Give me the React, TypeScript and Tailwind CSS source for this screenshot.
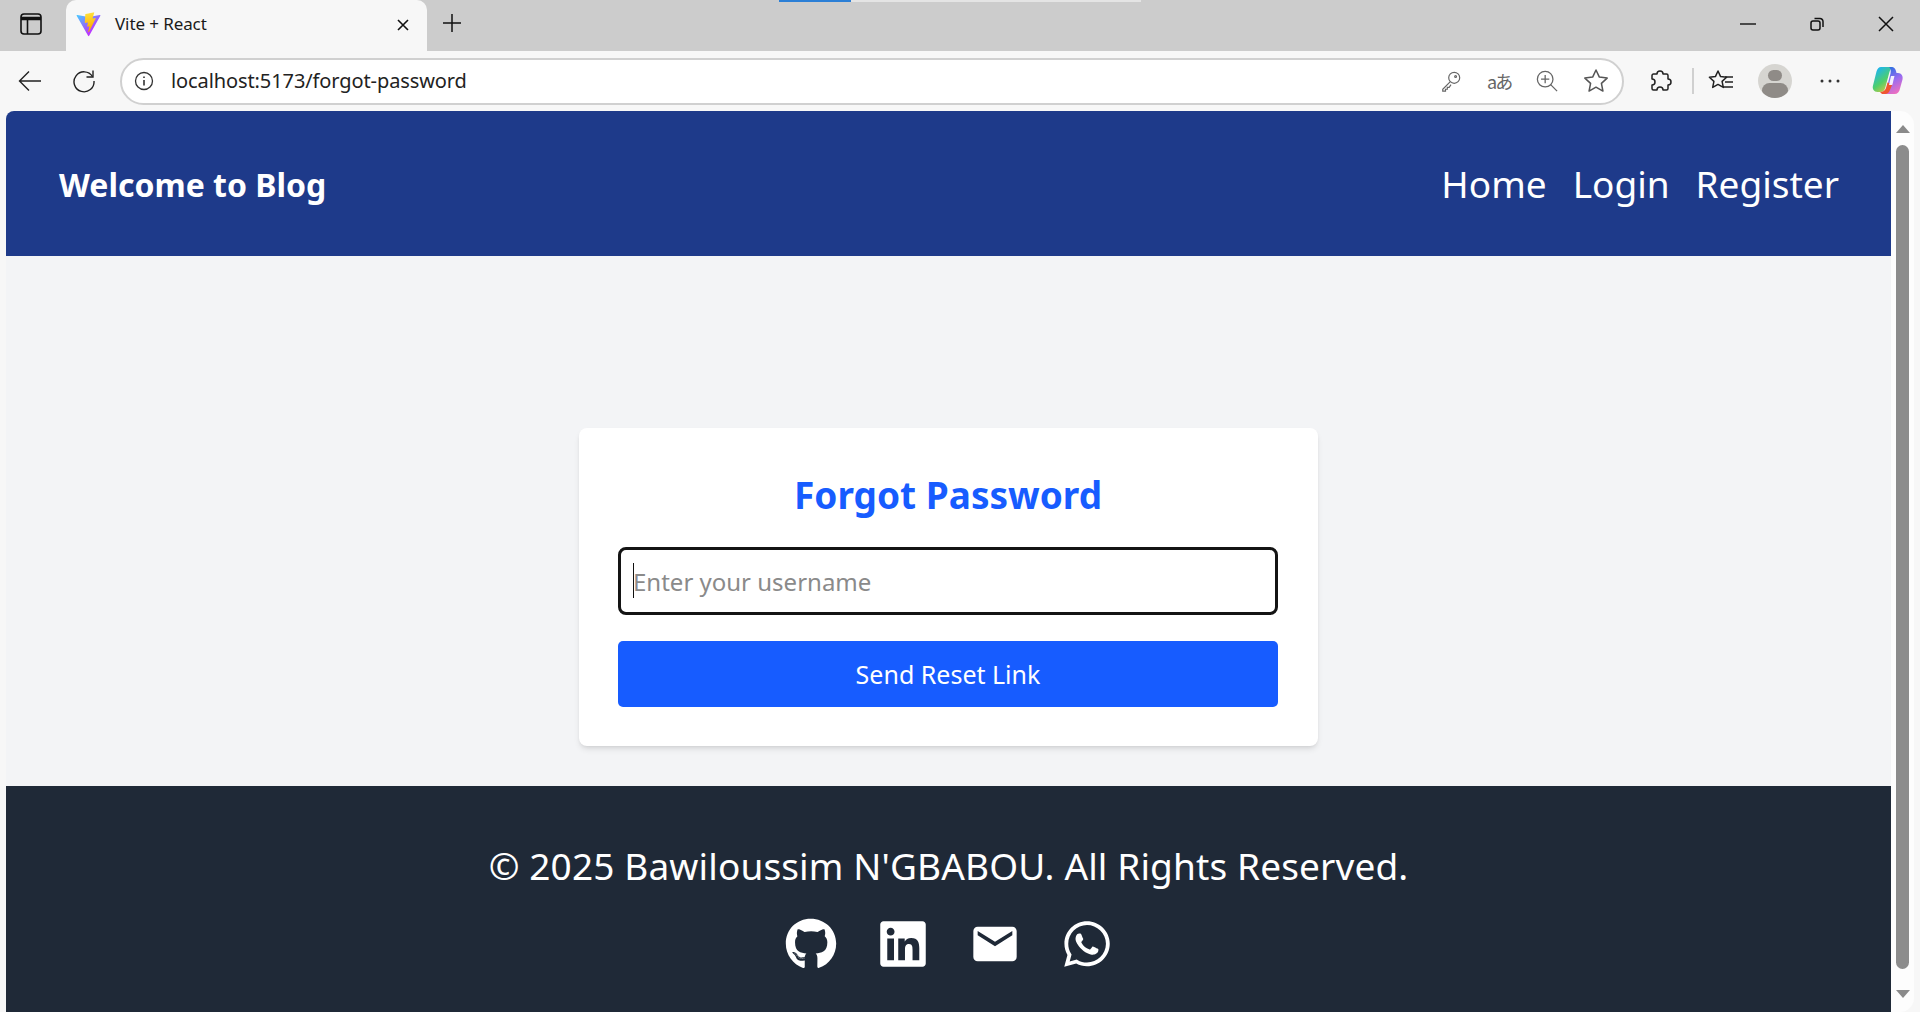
import React from 'react';
import { FaGithub, FaLinkedin, FaWhatsapp } from 'react-icons/fa';
import { MdEmail } from 'react-icons/md';

const ViteLogo = () => (
  <svg width="25" height="25" viewBox="0 0 410 404" fill="none">
    <path d="M399.6 59.5 215.9 388.2c-3.8 6.8-13.5 6.8-17.4.1L11.1 59.5c-4.1-7.3 2.1-16.2 10.4-14.7l183.9 32.9c1.2.2 2.4.2 3.5 0l180-32.8c8.3-1.5 14.6 7.3 10.5 14.6z" fill="url(#vitea)" />
    <path d="M292.9 1.6 156.9 28.2c-2.2.4-3.9 2.3-4 4.6l-8.4 141.2c-.2 3.3 2.9 5.9 6.1 5.2l37.9-8.7c3.5-.8 6.7 2.3 6 5.8l-11.3 55.2c-.8 3.7 2.7 6.9 6.3 5.8l23.4-7.1c3.6-1.1 7.1 2.1 6.3 5.8l-17.9 86.6c-1.1 5.4 6.1 8.4 9.1 3.7l2-3.1 110.8-221.2c1.9-3.7-1.3-7.9-5.4-7.1l-39 7.5c-3.7.7-6.8-2.7-5.7-6.3l25.5-88.3c1.1-3.6-2.1-7-5.7-6.3z" fill="url(#viteb)" />
    <defs>
      <linearGradient id="vitea" x1="6" y1="33" x2="235" y2="344" gradientUnits="userSpaceOnUse">
        <stop stopColor="#41D1FF" />
        <stop offset="1" stopColor="#BD34FE" />
      </linearGradient>
      <linearGradient id="viteb" x1="194" y1="8" x2="236" y2="293" gradientUnits="userSpaceOnUse">
        <stop stopColor="#FFEA83" />
        <stop offset=".08" stopColor="#FFDD35" />
        <stop offset="1" stopColor="#FFA800" />
      </linearGradient>
    </defs>
  </svg>
);

const CopilotLogo = () => (
  <svg width="34" height="34" viewBox="0 0 34 34" fill="none">
    <defs>
      <linearGradient id="copa" x1="4" y1="8" x2="20" y2="28" gradientUnits="userSpaceOnUse">
        <stop stopColor="#1fb6e8" />
        <stop offset=".5" stopColor="#4fcf6a" />
        <stop offset="1" stopColor="#f6c33a" />
      </linearGradient>
      <linearGradient id="copb" x1="18" y1="2" x2="32" y2="26" gradientUnits="userSpaceOnUse">
        <stop stopColor="#1c6fe0" />
        <stop offset=".55" stopColor="#9a6cf0" />
        <stop offset="1" stopColor="#ee6fc0" />
      </linearGradient>
    </defs>
    <path d="M11 3h12.500c-2.500 1-3.500 3-4.200 5.500l-4 15C14.500 26.500 13 28 10.500 28H7.500C4 28 2 25 3 21.500l3.500-14C7.200 4.800 8.800 3 11 3z" fill="url(#copa)" />
    <path d="M19 3h2.500c2.300 0 3.800 1.500 4.500 4l.5 2h1.500c3.500 0 5.300 3 4.500 6.500l-2.500 9C29.500 28 27.500 30 24.500 30H12c2.500-.8 3.800-2.800 4.500-5.500l4-15C21 6.800 20.800 4.500 19 3z" fill="url(#copb)" />
    <path d="M10 28c3 0 5-1.500 6-4l1.500-5.500 5 1.500-3 7c-.8 2-2.500 3-4.500 3H12z" fill="#f0562f" />
    <path d="M21 12h3.500l-2.200 9H19z" fill="#f4f0ff" />
  </svg>
);

const Scrollbar = () => (
  <div className="w-[23px] shrink-0 flex flex-col items-center bg-[#fdfdfd] rounded-tr-[14px] rounded-br-[14px]">
    <div className="mt-[14px] h-0 w-0 border-x-[7px] border-b-[8px] border-x-transparent border-b-[#8a8a8a]" />
    <div className="mt-[12px] w-[13px] h-[824px] rounded-full bg-[#8c8c8c]" />
    <div className="mt-[21px] h-0 w-0 border-x-[7px] border-t-[8px] border-x-transparent border-t-[#8a8a8a]" />
  </div>
);

export default function App() {
  return (
    <div className="h-screen w-full overflow-hidden flex flex-col bg-[#f7f7f7] font-['Noto_Sans',sans-serif]">
      {/* TAB STRIP */}
      <div className="relative h-[51px] shrink-0 bg-[#cccccc] flex items-end">
        <div className="w-[66px] h-[51px] flex items-center pl-[20px] pb-[3px]">
          <svg width="22" height="22" viewBox="0 0 22 22" fill="none" stroke="#111" strokeWidth="1.6">
            <rect x="1" y="1" width="20" height="20" rx="3" />
            <path d="M1 5.500h20" strokeWidth="3.500" />
            <path d="M7.500 7v14" />
          </svg>
        </div>
        <div className="w-[361px] h-[51px] bg-[#f7f7f7] rounded-t-[10px] flex items-center pl-[10px] pr-[17px] pb-[2px]">
          <ViteLogo />
          <span className="ml-[14px] text-[17px] tracking-[-0.1px] text-[#1a1a1a] pb-[1px]">Vite + React</span>
          <svg className="ml-auto" width="14" height="14" viewBox="0 0 14 14" stroke="#111" strokeWidth="1.6">
            <path d="M2 2l10 10M12 2L2 12" />
          </svg>
        </div>
        <div className="w-[70px] h-[51px] flex items-center pl-[15px] pb-[5px]">
          <svg width="20" height="20" viewBox="0 0 20 20" stroke="#111" strokeWidth="1.5">
            <path d="M10 1v18M1 10h18" />
          </svg>
        </div>
        <div className="absolute top-0 left-[779px] h-[2px] w-[72px] bg-[#2b7fd6]" />
        <div className="absolute top-0 left-[851px] h-[2px] w-[290px] bg-[#e4e4e4]" />
        <div className="ml-auto h-[51px] flex items-center pr-[26px] gap-[53px] pb-[3px]">
          <svg width="16" height="16" viewBox="0 0 16 16" stroke="#111" strokeWidth="1.4"><path d="M0 8h16" /></svg>
          <svg width="16" height="16" viewBox="0 0 16 16" fill="none" stroke="#111" strokeWidth="1.5">
            <rect x="2" y="5" width="9" height="9" rx="2" />
            <path d="M5.500 2.500h5.500a3 3 0 0 1 3 3v5.500" />
          </svg>
          <svg width="16" height="16" viewBox="0 0 16 16" stroke="#111" strokeWidth="1.5"><path d="M1 1l14 14M15 1L1 15" /></svg>
        </div>
      </div>

      {/* TOOLBAR */}
      <div className="h-[60px] shrink-0 flex items-center pl-[18px]">
        <svg width="24" height="24" viewBox="0 0 24 24" fill="none" stroke="#222" strokeWidth="1.4">
          <path d="M23 12H1.500M11 2.500 1.500 12l9.500 9.500" />
        </svg>
        <svg className="ml-[30px]" width="24" height="24" viewBox="0 0 24 24" fill="none" stroke="#222" strokeWidth="1.4">
          <path d="M20.500 7.500A10 10 0 1 0 22 12" />
          <path d="M21 1.500v6.500h-6.500" />
        </svg>
        <div className="ml-[24px] w-[1504px] shrink-0 h-[47px] bg-white rounded-full border-2 border-[#d0d0d0] flex items-center pl-[12px] pr-[13px]">
          <svg width="20" height="20" viewBox="0 0 20 20" fill="none" stroke="#333" strokeWidth="1.3">
            <circle cx="10" cy="10" r="8.500" />
            <path d="M10 9v5.500M10 5.500v1.500" strokeWidth="1.600" />
          </svg>
          <span className="ml-[17px] text-[20px] tracking-[-0.1px] text-[#222]">localhost:5173/forgot-password</span>
          <svg className="ml-auto" width="22" height="22" viewBox="0 0 24 24" fill="none" stroke="#666" strokeWidth="1.3">
            <circle cx="15.500" cy="8.500" r="6" />
            <path d="M11 13 3 21v2h3v-2h2v-2h2l2-3" />
            <circle cx="17" cy="7" r="1" />
          </svg>
          <span className="ml-[25px] w-[26px] text-[18px] leading-none whitespace-nowrap text-[#666] font-['Noto_Sans_CJK_JP',sans-serif] tracking-[-2px]">aあ</span>
          <svg className="ml-[23px]" width="22" height="22" viewBox="0 0 24 24" fill="none" stroke="#666" strokeWidth="1.4">
            <circle cx="10" cy="10" r="8.500" />
            <path d="M16 16l7 7M10 5.500v9M5.500 10h9" />
          </svg>
          <svg className="ml-[25px]" width="26" height="26" viewBox="0 0 24 24" fill="none" stroke="#555" strokeWidth="1.4" strokeLinejoin="round">
            <path d="M12 1.800l3.100 6.600 7.200.9-5.300 4.900 1.400 7.100-6.400-3.600-6.400 3.600 1.400-7.100-5.300-4.900 7.200-.9z" />
          </svg>
        </div>
        <svg className="ml-[24px]" width="24" height="24" viewBox="0 0 24 24" fill="none" stroke="#222" strokeWidth="1.5" strokeLinejoin="round">
          <path d="M9 5a3 3 0 0 1 6 0h3.500a1.500 1.500 0 0 1 1.500 1.500V10a3 3 0 0 1 0 6v3.500a1.500 1.500 0 0 1-1.500 1.500H15a3 3 0 0 0-6 0H5.500A1.500 1.500 0 0 1 4 19.500V16a3 3 0 0 0 0-6V6.500A1.500 1.500 0 0 1 5.500 5z" />
        </svg>
        <div className="ml-[20px] h-[26px] w-[2px] bg-[#d0d0d0]" />
        <svg className="ml-[14px]" width="26" height="26" viewBox="0 0 26 26" fill="none" stroke="#222" strokeWidth="1.5" strokeLinejoin="round">
          <path d="M10 3l2.600 5.600 6 .7-4.500 4.100 1.200 6-5.300-3-5.300 3 1.200-6L1.400 9.300l6-.7z" />
          <path d="M17 9h8M17 14h8M15 19h10" />
        </svg>
        <div className="ml-[24px] w-[34px] h-[34px] rounded-full bg-[#d6d5d1] overflow-hidden flex flex-col items-center">
          <div className="mt-[6px] w-[14px] h-[14px] rounded-full bg-[#8f8b87]" />
          <div className="mt-[2px] w-[26px] h-[20px] rounded-full bg-[#8f8b87]" />
        </div>
        <svg className="ml-[28px]" width="20" height="6" viewBox="0 0 20 6" fill="#333">
          <circle cx="2" cy="3" r="1.500" />
          <circle cx="10" cy="3" r="1.500" />
          <circle cx="18" cy="3" r="1.500" />
        </svg>
        <div className="ml-[30px]"><CopilotLogo /></div>
      </div>

      {/* PAGE */}
      <div className="flex-1 min-h-0 flex ml-[6px] mr-[6px]">
        <div className="flex-1 min-w-0 flex flex-col bg-[#f3f4f6] overflow-hidden rounded-tl-[8px]">
          <header className="h-[145px] shrink-0 bg-[#1e3a8a] flex items-center justify-between pl-[53px] pr-[52px] text-white">
            <h1 className="text-[32px] font-bold leading-none pt-[2px]">Welcome to Blog</h1>
            <nav className="flex gap-[26px] text-[37px] leading-none">
              <a>Home</a>
              <a>Login</a>
              <a>Register</a>
            </nav>
          </header>

          <main className="flex-1 min-h-0 flex justify-center pt-[172px]">
            <div className="w-[739px] h-[318px] bg-white rounded-lg shadow-md pl-[39px] pr-[40px] pt-[41px]">
              <h2 className="text-center text-[37px] leading-[52px] font-bold text-[#175cff]">Forgot Password</h2>
              <div className="relative mt-[26px]">
                <input
                  placeholder="Enter your username"
                  className="w-full h-[68px] px-[12px] bg-white border-[3px] border-[#141414] rounded-lg text-[24px] text-[#111] placeholder:text-[#8a8a8a] outline-none"
                />
                <div className="absolute left-[15px] top-[16px] h-[35px] w-px bg-[#111]" />
              </div>
              <button className="mt-[26px] w-full h-[66px] pt-[1px] bg-[#175cff] rounded-[5px] text-white text-[25px]">
                Send Reset Link
              </button>
            </div>
          </main>

          <footer className="h-[226px] shrink-0 bg-[#1f2937] flex flex-col items-center text-white pt-[55px]">
            <p className="text-[37px] tracking-[0.13px] leading-[50px]">© 2025 Bawiloussim N&apos;GBABOU. All Rights Reserved.</p>
            <div className="mt-[27px] flex items-center gap-[40px] text-[52px]">
              <FaGithub />
              <FaLinkedin />
              <MdEmail />
              <FaWhatsapp />
            </div>
          </footer>
        </div>
        <Scrollbar />
      </div>
    </div>
  );
}
